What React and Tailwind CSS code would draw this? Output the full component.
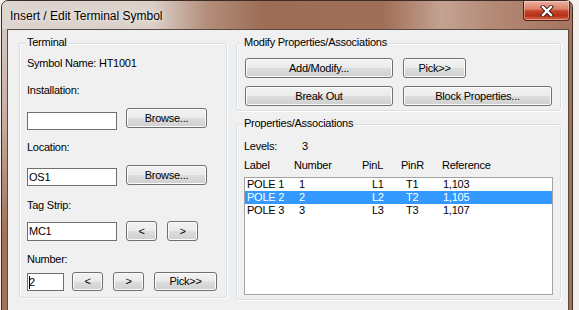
import React from "react";

function Btn({ className = "", children }) {
  return (
    <div
      className={`flex items-center justify-center rounded-[3px] border border-[#707070] bg-[linear-gradient(to_bottom,#f2f2f2_0%,#ebebeb_48%,#dddddd_52%,#cfcfcf_100%)] shadow-[inset_0_0_0_1px_#fcfcfc] leading-none text-black ${className}`}
    >
      {children}
    </div>
  );
}

function Field({ className = "", children }) {
  return (
    <div className={`flex items-center border border-[#6f6f6f] bg-white pl-[1px] leading-none ${className}`}>
      {children}
    </div>
  );
}

function Group({ label, className = "", pad = "", children }) {
  return (
    <div
      className={`rounded-[3px] border border-[#d5dfe5] shadow-[inset_1px_1px_0_#ffffff,1px_1px_0_#ffffff] ${className}`}
    >
      <div className="-mt-[8px] ml-[5px] w-fit bg-[#f0f0f0] px-[2px] leading-[13px]">{label}</div>
      <div className={pad}>{children}</div>
    </div>
  );
}

function Close() {
  return (
    <div className="mr-[2px] flex h-[20px] w-[47px] items-center justify-center rounded-b-[4px] border border-t-0 border-[#4e2418] bg-[linear-gradient(to_bottom,#eab0a2_0%,#df8169_42%,#c4452c_52%,#b5321a_78%,#de6a4e_100%)] shadow-[inset_0_0_0_1px_rgba(255,255,255,0.35)]">
      <svg width="16" height="12" viewBox="0 0 16 12">
        <path d="M4 2 L12 10 M12 2 L4 10" stroke="#3a1a12" strokeWidth="4.2" strokeLinecap="square" fill="none" />
        <path d="M4 2 L12 10 M12 2 L4 10" stroke="#ffffff" strokeWidth="2.4" strokeLinecap="square" fill="none" />
      </svg>
    </div>
  );
}

const rows = [
  { l: "POLE 1", n: "1", pl: "L1", pr: "T1", r: "1,103", sel: false },
  { l: "POLE 2", n: "2", pl: "L2", pr: "T2", r: "1,105", sel: true },
  { l: "POLE 3", n: "3", pl: "L3", pr: "T3", r: "1,107", sel: false },
];

export default function App() {
  return (
    <div className="h-[310px] w-[579px] overflow-hidden bg-[#f3efed] font-['Liberation_Sans',Arial,sans-serif] text-[11px] tracking-[-0.25px] text-black">
      <div className="ml-[1px] flex h-[330px] w-[572px] flex-col rounded-t-[7px] border border-[#3b2c24] bg-[linear-gradient(to_right,transparent_7px,#a3725b_7px),linear-gradient(to_bottom,#d9cfca_0%,#c7aea2_35%,#a3735c_70%)]">
        <div className="flex h-[28px] justify-between rounded-t-[6px] bg-[linear-gradient(to_right,#ddd4cf_0px,#dbd0ca_150px,#b38e7b_205px,#9d6d56_260px,#a06e56_380px,#c4a393_440px,#b48976_490px,#a57460_572px)]">
          <div className="pl-[8px] pt-[8px] text-[12px] leading-[14px] tracking-normal text-black [text-shadow:0_0_6px_#f2ece9,0_0_3px_#f2ece9]">
            Insert / Edit Terminal Symbol
          </div>
          <Close />
        </div>
        <div className="ml-[5px] mr-[3px] flex flex-1 border border-[#5a4a44] bg-[#f0f0f0] pl-[11px] pt-[13px]">
          <Group label="Terminal" className="h-[255px] w-[208px]" pad="pl-[7px]">
            <div className="mt-[8px] leading-[13px]">Symbol Name: HT1001</div>
            <div className="mt-[14px] leading-[13px]">Installation:</div>
            <div className="mt-[11px] flex items-start">
              <Field className="mt-[4px] h-[18px] w-[90px]"></Field>
              <Btn className="ml-[9px] h-[20px] w-[81px]">Browse...</Btn>
            </div>
            <div className="mt-[11px] leading-[13px]">Location:</div>
            <div className="mt-[11px] flex items-start">
              <Field className="mt-[3px] h-[18px] w-[90px]">OS1</Field>
              <Btn className="ml-[9px] h-[20px] w-[81px]">Browse...</Btn>
            </div>
            <div className="mt-[13px] leading-[13px]">Tag Strip:</div>
            <div className="mt-[9px] flex items-start">
              <Field className="mt-[1px] h-[19px] w-[90px]">MC1</Field>
              <Btn className="ml-[9px] h-[20px] w-[31px]">&lt;</Btn>
              <Btn className="ml-[10px] h-[20px] w-[31px]">&gt;</Btn>
            </div>
            <div className="mt-[12px] leading-[13px]">Number:</div>
            <div className="mt-[6px] flex items-start">
              <Field className="mt-[1px] h-[18px] w-[37px]">
                <span className="h-[13px] w-px bg-black"></span>
                <span className="-ml-[1px]">2</span>
              </Field>
              <Btn className="ml-[8px] h-[19px] w-[31px]">&lt;</Btn>
              <Btn className="ml-[10px] h-[19px] w-[31px]">&gt;</Btn>
              <Btn className="ml-[10px] h-[19px] w-[63px]">Pick&gt;&gt;</Btn>
            </div>
          </Group>

          <div className="ml-[9px] flex w-[325px] flex-col">
            <Group label="Modify Properties/Associations" className="h-[68px]" pad="pl-[8px]">
              <div className="mt-[9px] flex">
                <Btn className="h-[20px] w-[148px]">Add/Modify...</Btn>
                <Btn className="ml-[10px] h-[20px] w-[63px]">Pick&gt;&gt;</Btn>
              </div>
              <div className="mt-[8px] flex">
                <Btn className="h-[20px] w-[148px]">Break Out</Btn>
                <Btn className="ml-[10px] h-[20px] w-[149px]">Block Properties...</Btn>
              </div>
            </Group>

            <Group label="Properties/Associations" className="mt-[13px] h-[176px]" pad="pl-[7px]">
              <div className="mt-[10px] flex leading-[13px]">
                <div className="w-[58px]">Levels:</div>
                <div>3</div>
              </div>
              <div className="mt-[6px] flex leading-[13px]">
                <div className="w-[50px]">Label</div>
                <div className="w-[68px]">Number</div>
                <div className="w-[39px]">PinL</div>
                <div className="w-[41px]">PinR</div>
                <div>Reference</div>
              </div>
              <div className="mt-[5px] h-[118px] w-[309px] border border-[#a3a3a3] bg-white">
                {rows.map((r) => (
                  <div
                    key={r.l}
                    className={`flex h-[13px] items-center pl-[2px] leading-[13px] ${r.sel ? "bg-[#3399ff] text-white" : "text-black"}`}
                  >
                    <div className="w-[52px]">{r.l}</div>
                    <div className="w-[73px]">{r.n}</div>
                    <div className="w-[34px]">{r.pl}</div>
                    <div className="w-[37px]">{r.pr}</div>
                    <div>{r.r}</div>
                  </div>
                ))}
              </div>
            </Group>
          </div>
        </div>
      </div>
    </div>
  );
}
